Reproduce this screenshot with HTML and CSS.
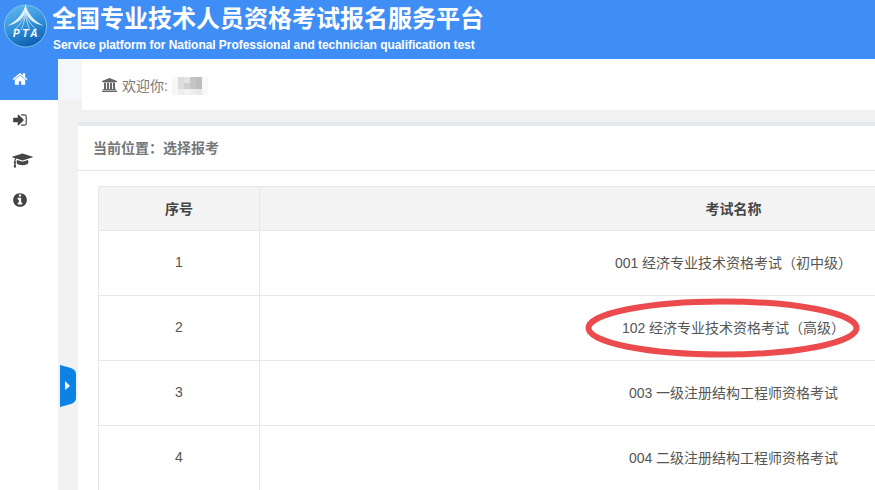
FILE: index.html
```html
<!DOCTYPE html>
<html lang="zh-CN">
<head>
<meta charset="utf-8">
<title>全国专业技术人员资格考试报名服务平台</title>
<link rel="stylesheet" href="styles.css">
</head>
<body>
<header class="topbar">
  <svg class="logo" viewBox="0 0 46 46" width="46" height="46">
    <defs>
      <linearGradient id="globe" x1="0.2" y1="0" x2="0.6" y2="1">
        <stop offset="0" stop-color="#5fb7ee"/>
        <stop offset="0.55" stop-color="#2f8fd8"/>
        <stop offset="1" stop-color="#0f5cae"/>
      </linearGradient>
    </defs>
    <circle cx="22.500" cy="24" r="21" fill="url(#globe)" stroke="#7cc0f0" stroke-width="1"/>
    <path d="M22.500 2C21 11 14 19 4 24C14 22 20 17 22.500 10C25 17 31 22 41 24C31 19 24 11 22.500 2Z" fill="#dff1fb"/>
    <path d="M22.500 10C21 18 16 24 11 28M22.500 10C24 18 29 24 34 28M22.500 10C22 18 20 24 18 28M22.500 10C23 18 25 24 27 28" fill="none" stroke="#cfe8f8" stroke-width="0.800"/>
    <path d="M6 36C15 27 31 27 40 36C30 32 16 32 6 36Z" fill="#2a7fcb"/>
    <text class="logo-text" x="23.500" y="35">PTA</text>
  </svg>
  <div class="brand">
    <div class="brand-title">全国专业技术人员资格考试报名服务平台</div>
    <div class="brand-sub">Service platform for National Professional and technician qualification test</div>
  </div>
</header>
<div class="layout">
  <nav class="sidebar">
    <a class="nav-item active"><svg class="ico-home" viewBox="0 0 1792 1792"><path d="M1472 992v480q0 26-19 45t-45 19h-384v-384h-256v384h-384q-26 0-45-19t-19-45v-480q0-1 .5-3t.5-3l575-474 575 474q1 2 1 6zm223-69l-62 74q-8 9-21 11h-3q-13 0-21-7l-692-577-692 577q-12 8-24 7-13-2-21-11l-62-74q-8-10-7-23.500t11-21.500l719-599q32-26 76-26t76 26l244 204v-195q0-14 9-23t23-9h192q14 0 23 9t9 23v408l219 182q10 8 11 21.500t-7 23.500z"/></svg></a>
    <a class="nav-item"><svg class="ico-home" viewBox="0 0 1792 1792"><path d="M1312 896q0 26-19 45l-544 544q-19 19-45 19t-45-19-19-45v-288h-448q-26 0-45-19t-19-45v-384q0-26 19-45t45-19h448v-288q0-26 19-45t45-19 45 19l544 544q19 19 19 45zm352-352v704q0 119-84.500 203.500t-203.500 84.500h-320q-13 0-22.500-9.500t-9.500-22.500q0-4-1-20t-.5-26.500 3-23.500 10-19.500 20.500-6.500h320q66 0 113-47t47-113v-704q0-66-47-113t-113-47h-312l-11.500-1-11.500-3-8-5.500-7-9-2-13.500q0-4-1-20t-.5-26.500 3-23.500 10-19.500 20.500-6.500h320q119 0 203.500 84.500t84.500 203.500z"/></svg></a>
    <a class="nav-item"><svg class="ico-cap" viewBox="0 0 2304 1792"><path d="M1774 836l18 316q4 69-82 128t-235 93.500-323 34.500-323-34.500-235-93.500-82-128l18-316 574 181q22 7 48 7t48-7zm530-324q0 23-22 31l-1120 352q-4 1-10 1t-10-1l-652-206q-43 34-71 111.500t-34 178.500q63 36 63 109 0 69-58 107l58 433q2 14-8 25-9 11-24 11h-192q-15 0-24-11-10-11-8-25l58-433q-58-38-58-107 0-73 65-111 11-207 98-330l-333-104q-22-8-22-31t22-31l1120-352q4-1 10-1t10 1l1120 352q22 8 22 31z"/></svg></a>
    <a class="nav-item"><svg class="ico-home" viewBox="0 0 1792 1792"><path d="M1152 1376v-160q0-14-9-23t-23-9h-96v-512q0-14-9-23t-23-9h-320q-14 0-23 9t-9 23v160q0 14 9 23t23 9h96v320h-96q-14 0-23 9t-9 23v160q0 14 9 23t23 9h448q14 0 23-9t9-23zm-128-896v-160q0-14-9-23t-23-9h-192q-14 0-23 9t-9 23v160q0 14 9 23t23 9h192q14 0 23-9t9-23zm640 416q0 209-103 385.500t-279.500 279.500-385.500 103-385.500-103-279.500-279.500-103-385.500 103-385.500 279.500-279.500 385.500-103 385.500 103 279.500 279.500 103 385.500z"/></svg></a>
  </nav>
  <main class="content">
    <div class="welcome-row">
      <div class="gutter"></div>
      <div class="welcome">
        <svg class="ico-bank" viewBox="0 0 2048 1792"><path d="M960 0l960 384v128h-128q0 26-20.500 45t-48.500 19h-1526q-28 0-48.500-19t-20.500-45h-128v-128zm-704 640h256v768h128v-768h256v768h128v-768h256v768h128v-768h256v768h59q28 0 48.500 19t20.500 45v64h-1664v-64q0-26 20.500-45t48.500-19h59v-768zm1595 960q28 0 48.500 19t20.500 45v128h-1920v-128q0-26 20.500-45t48.500-19h1782z"/></svg>
        <span>欢迎你:</span>
        <svg class="mosaic" viewBox="0 0 6 3" width="36" height="18" shape-rendering="crispEdges">
          <rect x="0" y="0" width="1" height="3" fill="#f6f6f6"/>
          <rect x="1" y="0" width="1" height="3" fill="#dcdcdc"/>
          <rect x="2" y="0" width="1" height="3" fill="#e4e4e4"/>
          <rect x="3" y="0" width="1" height="3" fill="#c4c4c4"/>
          <rect x="4" y="0" width="1" height="3" fill="#bdbdbd"/>
          <rect x="5" y="0" width="1" height="3" fill="#f8f8f8"/>
          <rect x="1" y="2" width="1" height="1" fill="#ededed"/>
          <rect x="2" y="1" width="1" height="1" fill="#cfcfcf"/>
          <rect x="2" y="2" width="1" height="1" fill="#f2f2f2"/>
          <rect x="3" y="2" width="1" height="1" fill="#eeeeee"/>
          <rect x="4" y="2" width="1" height="1" fill="#e8e8e8"/>
        </svg>
      </div>
    </div>
    <section class="card">
      <div class="crumb">当前位置：选择报考</div>
      <div class="card-body">
        <table class="exam-table">
          <thead>
            <tr><th class="col-no">序号</th><th>考试名称</th></tr>
          </thead>
          <tbody>
            <tr><td>1</td><td>001 经济专业技术资格考试（初中级）</td></tr>
            <tr><td>2</td><td>102 经济专业技术资格考试（高级）</td></tr>
            <tr><td>3</td><td>003 一级注册结构工程师资格考试</td></tr>
            <tr><td>4</td><td>004 二级注册结构工程师资格考试</td></tr>
          </tbody>
        </table>
      </div>
    </section>
  </main>
</div>
<svg class="toggle" viewBox="0 0 16 42" width="16" height="42">
  <path d="M0 0L11 3Q16 5 16 9V33Q16 37 11 39L0 42Z" fill="#0b82e4"/>
  <path d="M5 16L10 21L5 25Z" fill="#fff"/>
</svg>
<svg class="mark" viewBox="0 0 275 60" width="275" height="60">
  <ellipse cx="137.500" cy="30" rx="134" ry="26.500" fill="none" stroke="#ec4b4d" stroke-width="6"/>
</svg>
</body>
</html>
```
FILE: styles.css
```css
* {
  box-sizing: border-box;
}

html,
body {
  margin: 0;
  height: 490px;
  overflow: hidden;
}

body {
  position: relative;
  display: flex;
  flex-direction: column;
  font-family: "Liberation Sans", "Noto Sans CJK SC", sans-serif;
  font-size: 14px;
  color: #676a6c;
  background: #f1f1f2;
}

.topbar {
  display: flex;
  align-items: flex-start;
  height: 59px;
  flex: none;
  padding: 2px 0 0 3px;
  background: #3f8ef5;
  color: #fff;
}

.logo {
  flex: none;
  margin-right: 3px;
}

.logo-text {
  font-family: "Liberation Sans", sans-serif;
  font-size: 10px;
  font-weight: bold;
  font-style: italic;
  letter-spacing: 2.500px;
  text-anchor: middle;
  fill: #fff;
}

.brand-title {
  font-family: "Noto Sans CJK SC", sans-serif;
  font-size: 24px;
  font-weight: bold;
  line-height: 29px;
}

.brand-sub {
  margin: 6px 0 0 1px;
  font-size: 12px;
  font-weight: bold;
  line-height: 16px;
  letter-spacing: -0.050px;
}

.layout {
  display: flex;
  flex: 1;
  min-height: 0;
}

.sidebar {
  flex: none;
  width: 58px;
  background: #fff;
}

.nav-item {
  display: flex;
  align-items: center;
  height: 40px;
  padding-left: 12px;
  color: #444;
  fill: currentColor;
}

.nav-item.active {
  height: 41px;
  padding-bottom: 2px;
  background: #3f8ef5;
  color: #fff;
}

.ico-home {
  width: 16px;
  height: 16px;
}

.ico-cap {
  width: 21px;
  height: 17px;
}

.content {
  flex: 1;
  min-width: 0;
}

.welcome-row {
  display: flex;
  height: 51px;
}

.gutter {
  flex: none;
  width: 24px;
  height: 41px;
  background: #f5f6fa;
}

.welcome {
  flex: 1;
  display: flex;
  align-items: center;
  gap: 4px;
  padding: 0 0 0 20px;
  background: #fff;
  color: #777;
}

.ico-bank {
  width: 16px;
  height: 14px;
  fill: #666;
}

.mosaic {
  margin-top: 3px;
}

.card {
  margin: 12px 0 0 20px;
  border-top: 4px solid #e7eaec;
  background: #fff;
  height: 368px;
  overflow: hidden;
}

.crumb {
  height: 45px;
  padding-left: 15px;
  border-bottom: 1px solid #e7e7e7;
  font-size: 14px;
  font-weight: bold;
  line-height: 44px;
  color: #777;
}

.card-body {
  padding: 15px 0 0 20px;
}

.exam-table {
  width: 1110px;
  border-collapse: collapse;
  table-layout: fixed;
  color: #555;
  text-align: center;
}

.exam-table th {
  height: 44px;
  padding-bottom: 3px;
  border: 1px solid #e7e7e7;
  background: #f3f3f3;
  font-size: 14px;
  font-weight: bold;
  color: #444;
}

.exam-table td {
  height: 65px;
  padding-bottom: 3px;
  border: 1px solid #e7e7e7;
  font-size: 14px;
}

.col-no {
  width: 161px;
}

.toggle {
  position: absolute;
  left: 60px;
  top: 365px;
}

.mark {
  position: absolute;
  left: 585px;
  top: 298px;
}
```
